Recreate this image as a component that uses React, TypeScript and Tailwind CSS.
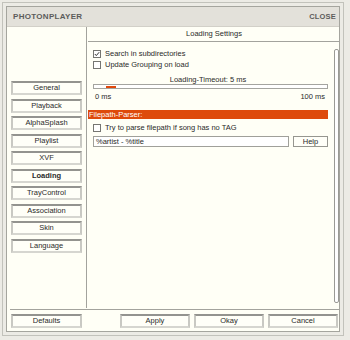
import React from 'react';

const font = { fontFamily: '"Liberation Sans", Arial, sans-serif' };

function Btn({ label, bold = false, w = 'w-[71px]' }: { label: string; bold?: boolean; w?: string }) {
  return (
    <div
      className={`${w} h-[14px] shrink-0 flex items-center justify-center border-2 border-t-[#93938f] border-x-[#c9c9c3] border-b-[#d6d6d0] bg-[#fffff8] text-[7.5px] leading-none text-[#2a2a2a] ${
        bold ? 'font-bold' : ''
      }`}
    >
      {label}
    </div>
  );
}

function Check({ checked = false }: { checked?: boolean }) {
  return (
    <div className="w-[8px] h-[8px] shrink-0 border border-[#767672] bg-white flex items-center justify-center">
      {checked && (
        <svg width="6" height="6" viewBox="0 0 6 6">
          <polyline points="0.8,3 2.3,4.6 5.2,1.2" fill="none" stroke="#333" strokeWidth="1" />
        </svg>
      )}
    </div>
  );
}

const menu = ['General', 'Playback', 'AlphaSplash', 'Playlist', 'XVF', 'Loading', 'TrayControl', 'Association', 'Skin', 'Language'];

export default function App() {
  return (
    <div className="w-[350px] h-[340px] bg-[#ecebe5] pl-[2px] pt-[2px] pr-[6px] pb-[4px]" style={font}>
      <div className="h-full border border-[#c2c2bb] p-[3px]">
        <div className="h-full border border-[#a5a59e] bg-[#fffff6] flex flex-col">
          {/* title bar */}
          <div className="h-[20px] shrink-0 bg-[#e3e1da] border-b border-[#d2d0c8] flex items-center justify-between pl-[6px] pr-[3px]">
            <span className="text-[8px] font-bold tracking-[0.3px] text-[#5c5c5a]">PHOTONPLAYER</span>
            <span className="text-[7.5px] font-bold tracking-[0.2px] text-[#5c5c5a]">CLOSE</span>
          </div>

          <div className="flex h-[281px] shrink-0">
            {/* left menu */}
            <div className="w-[80px] shrink-0 border-r border-[#a3a39d] pl-[4px] pt-[54px] flex flex-col gap-[3.5px]">
              {menu.map((m) => (
                <Btn key={m} label={m} bold={m === 'Loading'} />
              ))}
            </div>

            {/* settings */}
            <div className="flex-1 flex flex-col">
              <div className="h-[15px] shrink-0 ml-[1px] border-b border-[#a3a39d] flex items-center justify-center text-[7.5px] text-[#2a2a2a]">
                Loading Settings
              </div>
              <div className="flex-1 flex">
                <div className="flex-1 pl-[1px] flex flex-col text-[7.5px] text-[#2a2a2a]">
                  <div className="mt-[7px] h-[10px] pl-[5px] flex items-center gap-[4px]">
                    <Check checked />
                    <span>Search in subdirectories</span>
                  </div>
                  <div className="mt-[0.5px] h-[10px] pl-[5px] flex items-center gap-[4px]">
                    <Check />
                    <span>Update Grouping on load</span>
                  </div>
                  <div className="mt-[5px] h-[9px] leading-[9px] text-center">Loading-Timeout: 5 ms</div>
                  <div className="ml-[5px] h-[5px] border border-[#a4a49f] bg-white relative">
                    <div className="absolute left-[12px] bottom-0 w-[10px] h-[2px] bg-[#e0480c]" />
                  </div>
                  <div className="mt-[3px] h-[10px] pl-[7px] pr-[3px] flex items-center justify-between">
                    <span>0 ms</span>
                    <span>100 ms</span>
                  </div>
                  <div className="mt-[8px] h-[9px] bg-[#de4a0b] text-white leading-[9px] pl-[1px]">Filepath-Parser:</div>
                  <div className="mt-[4.5px] h-[10px] pl-[5px] flex items-center gap-[4px]">
                    <Check />
                    <span>Try to parse filepath if song has no TAG</span>
                  </div>
                  <div className="mt-[3px] pl-[5px] flex gap-[4px]">
                    <div className="w-[196px] h-[11px] border border-[#a0a09a] bg-white flex items-center pl-[2px]">
                      %artist - %title
                    </div>
                    <div className="w-[35px] h-[11px] border border-[#96968f] bg-[#fffff8] flex items-center justify-center">
                      Help
                    </div>
                  </div>
                </div>
                <div className="w-[5px] ml-[6px] mr-[1px] mt-[7px] mb-[5px] border border-[#9a9a95] rounded-[2px] bg-white" />
              </div>
            </div>
          </div>

          {/* footer */}
          <div className="mt-[1px] ml-[3px] border-t border-[#a3a39d] pt-[4px] pl-[1px] pr-[1px] flex items-start">
            <Btn label="Defaults" />
            <div className="flex-1" />
            <div className="flex gap-[4px]">
              <Btn label="Apply" w="w-[70px]" />
              <Btn label="Okay" w="w-[70px]" />
              <Btn label="Cancel" w="w-[70px]" />
            </div>
          </div>
        </div>
      </div>
    </div>
  );
}
